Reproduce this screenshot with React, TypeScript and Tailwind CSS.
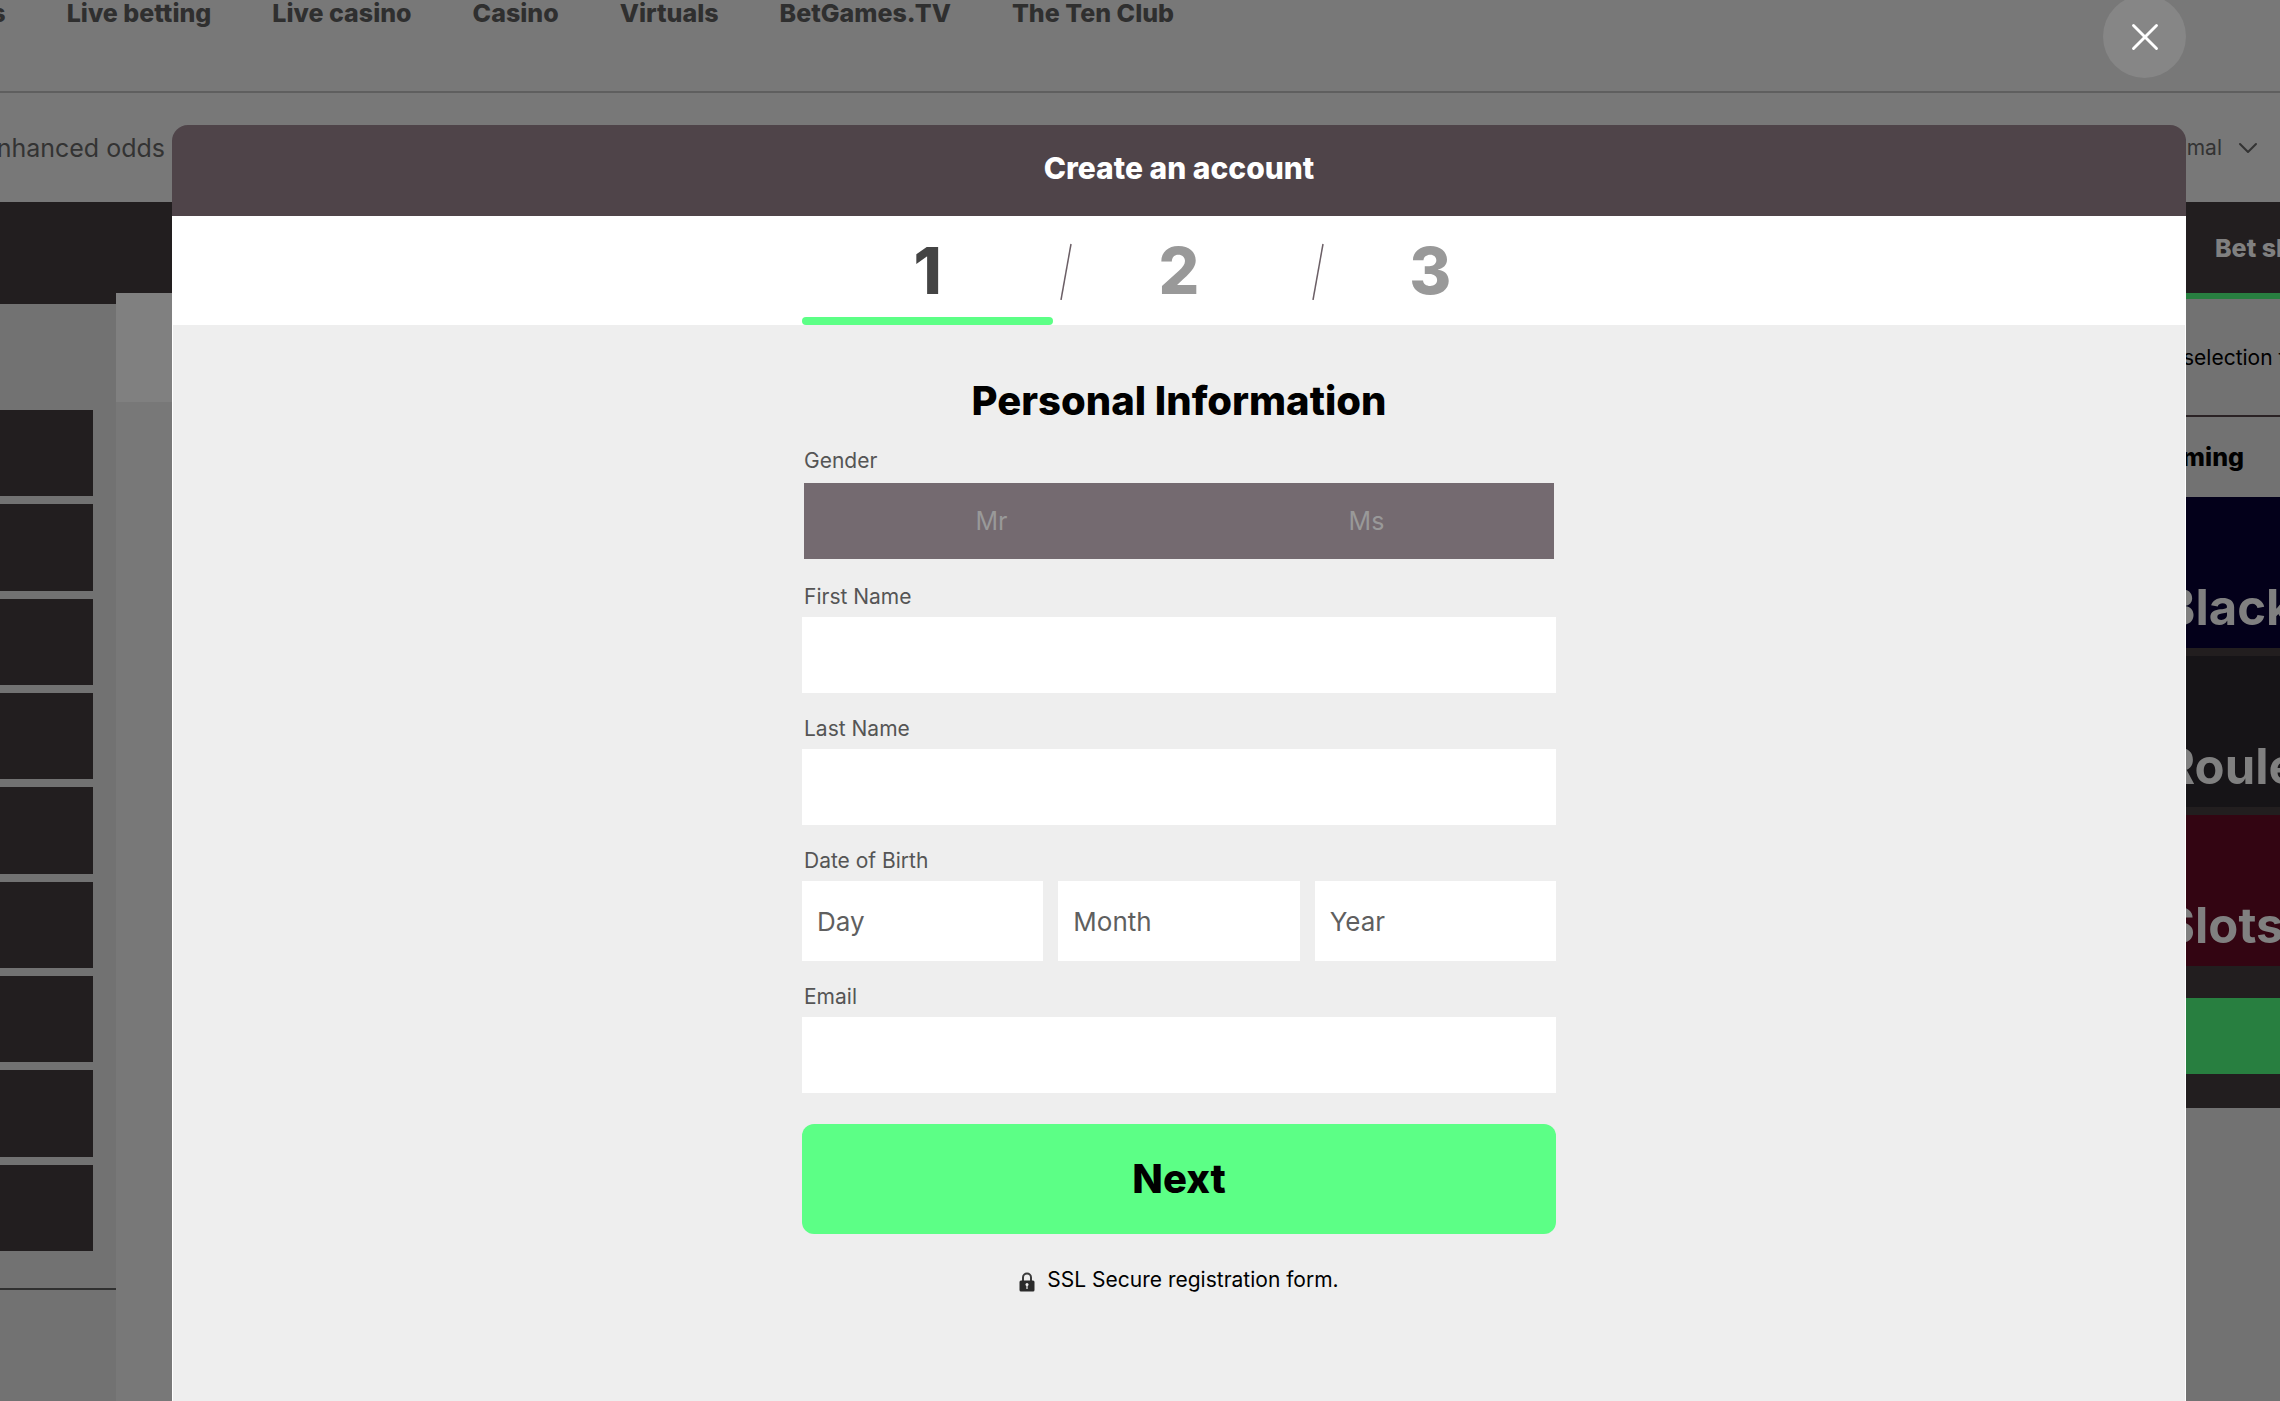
import { ChevronDown, X } from 'lucide-react';

const navItems = ['Sports', 'Live betting', 'Live casino', 'Casino', 'Virtuals', 'BetGames.TV', 'The Ten Club'];

const games = [
  { name: 'Blackjack', color: 'bg-[#03001a]' },
  { name: 'Roulette', color: 'bg-[#161417]' },
  { name: 'Slots', color: 'bg-[#330512]' },
];

function SiteHeader() {
  return (
    <header>
      <nav className="flex h-[93px] items-start gap-[61px] border-b-2 border-[#5f5f5f] text-[25px] leading-[26px] font-extrabold text-[#2f2f2f]">
        {navItems.map((item) => (
          <a key={item} href="#" className="whitespace-nowrap first:-ml-[77px]">
            {item}
          </a>
        ))}
      </nav>
      <div className="flex h-[109px] items-center justify-between text-[#333333]">
        <a href="#" className="flex w-[165px] justify-end pt-0.5 text-[25px] whitespace-nowrap">
          Enhanced odds
        </a>
        <button type="button" className="flex items-center gap-2.5 pr-4 text-[21px]">
          Decimal
          <ChevronDown className="size-8" strokeWidth={1.5} />
        </button>
      </div>
    </header>
  );
}

function Sidebar() {
  return (
    <aside className="w-[116px] bg-[#727272]">
      <div className="h-[11px] bg-[#221e1f]" />
      <ul className="mt-[106px] mr-[23px] flex h-[841px] flex-col gap-2">
        {Array.from({ length: 9 }, (_, i) => (
          <li key={i} className="flex-1 bg-[#221e1f]" />
        ))}
      </ul>
      <hr className="mt-[37px] border-t-2 border-[#303030]" />
    </aside>
  );
}

function BetSlip() {
  return (
    <aside className="w-32 bg-[#727272] whitespace-nowrap">
      <div className="flex h-[124px] items-center border-t-[6px] border-b-2 border-t-[#287f40] border-b-[#2a2224] pt-0.5 pl-[31px] text-[21px] text-black">
        selection to
      </div>
      <h2 className="flex h-20 items-center justify-end pt-0.5 pr-9 text-[25px] font-extrabold text-black">Gaming</h2>
      <div className="bg-[#221e1f] pb-[34px]">
        <div className="flex flex-col gap-2">
          {games.map((game) => (
            <a
              key={game.name}
              href="#"
              className={`flex h-[151px] items-end overflow-hidden pb-2.5 pl-[11px] text-[49px] leading-[60px] font-bold text-[#808080] ${game.color}`}
            >
              {game.name}
            </a>
          ))}
        </div>
        <div className="mt-8 h-[76px] bg-[#287f40]" />
      </div>
    </aside>
  );
}

function LockIcon() {
  return (
    <svg viewBox="0 0 16 20" className="mt-1 h-5 w-4" aria-hidden="true">
      <path d="M4 9V5.5a4 4 0 0 1 8 0V9" fill="none" stroke="#3a3a3a" strokeWidth="2" />
      <rect x="0.5" y="8.5" width="15" height="11" rx="1.5" fill="#2b2b2b" />
      <circle cx="8" cy="12.5" r="1.5" fill="#eeeeee" />
      <path d="M8 12v5" stroke="#eeeeee" strokeWidth="1.2" />
    </svg>
  );
}

function Steps() {
  return (
    <div className="border-x border-white bg-white">
      <ol className="mx-auto grid h-[109px] w-[754px] grid-cols-3 text-[64px] font-extrabold text-[#999999]">
        {[1, 2, 3].map((step) => (
          <li
            key={step}
            className="relative flex items-center justify-center first:text-[#444444]"
            aria-current={step === 1 ? 'step' : undefined}
          >
            {step > 1 && (
              <svg viewBox="0 0 12 58" className="absolute left-[7px] h-[58px] w-3" aria-hidden="true">
                <path d="M1 58L11 2" stroke="#6b5f66" strokeWidth="1.5" />
              </svg>
            )}
            {step}
            {step === 1 && <span className="absolute inset-x-0 bottom-0 h-2 rounded-full bg-[#5cff86]" />}
          </li>
        ))}
      </ol>
    </div>
  );
}

function TextField({ id, label, type = 'text' }: { id: string; label: string; type?: string }) {
  return (
    <div className="flex flex-col gap-1.5">
      <label htmlFor={id} className="pl-0.5 text-[21px] leading-7 text-[#555555]">
        {label}
      </label>
      <input id={id} type={type} className="h-[76px] w-full bg-white px-[15px] text-[26px] outline-none" />
    </div>
  );
}

function RegistrationForm() {
  return (
    <form className="mx-auto flex w-[754px] flex-col gap-[22px] pt-[52px]">
      <h2 className="text-center text-[40px] leading-[48px] font-extrabold text-black">Personal Information</h2>

      <fieldset>
        <legend className="pb-1.5 pl-0.5 text-[21px] leading-7 text-[#555555]">Gender</legend>
        <div className="p-0.5">
          <div className="grid h-[76px] grid-cols-2 bg-[#746a70] text-[25px] text-[#999999]">
            {['Mr', 'Ms'].map((title) => (
              <label key={title} className="flex items-center justify-center pt-0.5">
                <input type="radio" name="gender" value={title} className="sr-only" />
                {title}
              </label>
            ))}
          </div>
        </div>
      </fieldset>

      <TextField id="first-name" label="First Name" />
      <TextField id="last-name" label="Last Name" />

      <fieldset>
        <legend className="pb-1.5 pl-0.5 text-[21px] leading-7 text-[#555555]">Date of Birth</legend>
        <div className="grid grid-cols-3 gap-[15px]">
          {['Day', 'Month', 'Year'].map((part) => (
            <input
              key={part}
              type="text"
              aria-label={part}
              placeholder={part}
              className="h-20 w-full bg-white px-[15px] text-[26px] outline-none placeholder:text-[#5f5f5f]"
            />
          ))}
        </div>
      </fieldset>

      <TextField id="email" label="Email" type="email" />

      <button type="submit" className="mt-[9px] h-[110px] rounded-xl bg-[#5cff86] text-[40px] font-extrabold text-black">
        Next
      </button>
      <p className="mt-2.5 flex items-center justify-center gap-3 text-[21px] leading-7 text-black">
        <LockIcon />
        SSL Secure registration form.
      </p>
    </form>
  );
}

export default function App() {
  return (
    <div className="relative h-screen overflow-hidden bg-[#787878] font-[Inter,sans-serif]">
      <div className="flex h-full flex-col">
        <SiteHeader />
        <div className="flex h-[91px] shrink-0 items-center justify-end bg-[#221e1f]">
          <h2 className="w-32 overflow-hidden pt-0.5 pl-[63px] text-[25px] font-extrabold whitespace-nowrap text-[#808080]">
            Bet slip
          </h2>
        </div>
        <div className="flex flex-1">
          <Sidebar />
          <main className="flex-1">
            <div className="h-[109px] bg-[#808080]" />
          </main>
          <BetSlip />
        </div>
      </div>

      <div className="absolute inset-0 flex flex-col pr-[94px] pl-[172px]">
        <button
          type="button"
          aria-label="Close"
          className="-mt-[5px] flex size-[83px] shrink-0 items-center justify-center self-end rounded-full bg-[#868686] text-white"
        >
          <X className="size-[46px]" strokeWidth={1.5} />
        </button>
        <section
          role="dialog"
          aria-labelledby="dialog-title"
          className="mt-[47px] flex flex-1 flex-col overflow-hidden rounded-t-2xl"
        >
          <h1
            id="dialog-title"
            className="flex h-[91px] items-center justify-center bg-[#4f4449] pb-1 text-[30px] font-extrabold text-white"
          >
            Create an account
          </h1>
          <Steps />
          <div className="flex-1 border-x border-white bg-[#eeeeee]">
            <RegistrationForm />
          </div>
        </section>
      </div>
    </div>
  );
}
